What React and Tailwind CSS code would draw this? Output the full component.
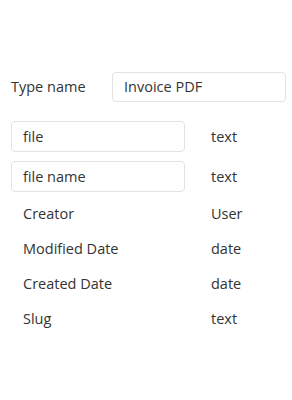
export default function App() {
  const rows = [
    ["Creator", "User"],
    ["Modified Date", "date"],
    ["Created Date", "date"],
    ["Slug", "text"],
  ];
  return (
    <div
      className="w-[292px] h-[400px] bg-white text-[14.5px] text-[#333333] px-[11px] pt-[72px]"
      style={{ fontFamily: '"Open Sans", sans-serif' }}
    >
      <div className="flex items-center">
        <div className="w-[101px] shrink-0">Type name</div>
        <div className="w-[174px] shrink-0 h-[30px] border border-[#e2e2e2] rounded-[4px] flex items-center pl-[11px]">
          Invoice PDF
        </div>
      </div>
      <div className="flex items-center mt-[19px]">
        <div className="w-[174px] shrink-0 h-[31px] border border-[#e2e2e2] rounded-[4px] flex items-center pl-[11px]">
          file
        </div>
        <div className="ml-[26px]">text</div>
      </div>
      <div className="flex items-center mt-[9px]">
        <div className="w-[174px] shrink-0 h-[31px] border border-[#e2e2e2] rounded-[4px] flex items-center pl-[11px]">
          file name
        </div>
        <div className="ml-[26px]">text</div>
      </div>
      <div className="mt-[4px]">
        {rows.map(([a, b]) => (
          <div key={a} className="flex items-center h-[35px]">
            <div className="w-[200px] shrink-0 pl-[12px]">{a}</div>
            <div>{b}</div>
          </div>
        ))}
      </div>
    </div>
  );
}
